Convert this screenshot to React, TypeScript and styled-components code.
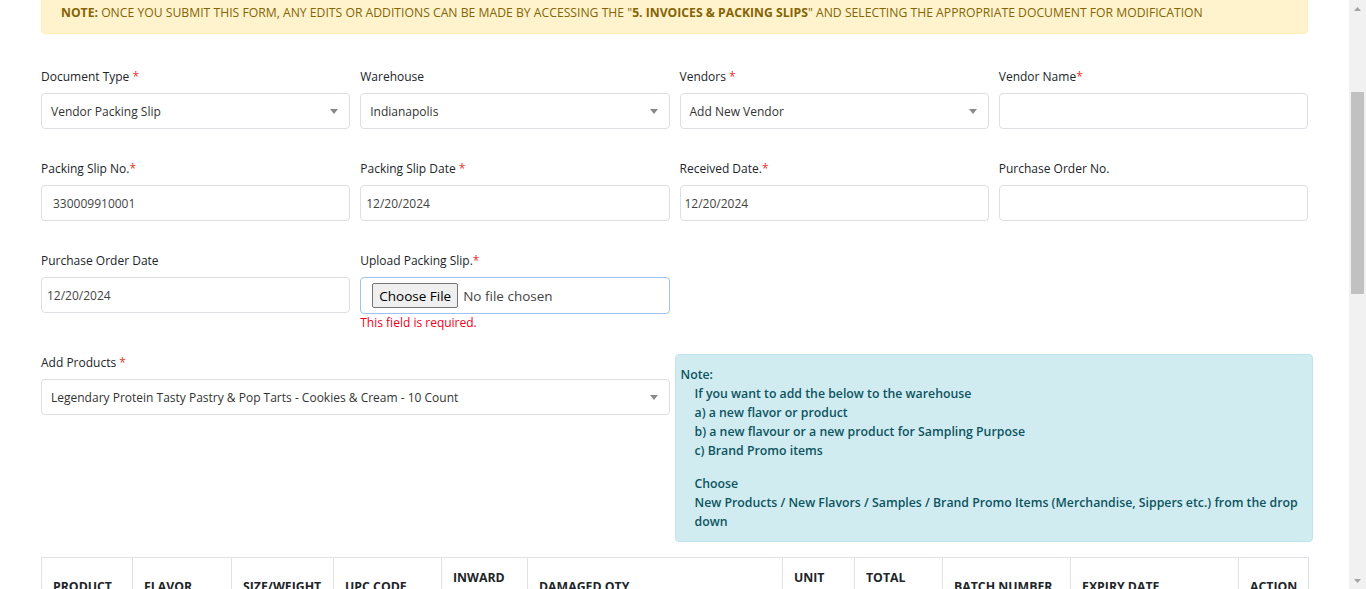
import React, { useLayoutEffect, useRef } from "react";
import styled, { createGlobalStyle } from "styled-components";

const GlobalStyle = createGlobalStyle`
  html, body {
    margin: 0;
    padding: 0;
    background: #ffffff;
  }
  html { scrollbar-width: none; }
  ::-webkit-scrollbar { display: none; }
  body {
    font-family: "Open Sans", "Liberation Sans", sans-serif;
    font-size: 12px;
    color: #212529;
  }
  * { box-sizing: border-box; }
`;

// ---------- window scrollbar (drawn over the page edge) ----------

const ScrollTrack = styled.div`
  position: fixed;
  top: 0;
  right: 0;
  width: 17px;
  height: 100vh;
  background: #f1f1f1;
  z-index: 10;
`;

const ScrollThumb = styled.div`
  position: absolute;
  top: 92px;
  left: 2px;
  right: 2px;
  height: 202px;
  background: #c1c1c1;
`;

const ScrollArrow = styled.div<{ $down?: boolean }>`
  position: absolute;
  left: 0;
  width: 17px;
  height: 17px;
  display: flex;
  align-items: center;
  justify-content: center;
  ${p => (p.$down ? "bottom: 0;" : "top: 0;")}
`;

const ArrowGlyph = ({ down }: { down?: boolean }) => (
  <svg width="7" height="4" viewBox="0 0 7 4">
    <path d={down ? "M0 0 L7 0 L3.5 4 Z" : "M0 4 L7 4 L3.5 0 Z"} fill="#a3a3a3" />
  </svg>
);

// ---------- page chrome (above the fold) ----------

const Page = styled.div`
  min-height: 1618px;
  padding-bottom: 60px;
`;

const TopBar = styled.div`
  height: 56px;
  display: flex;
  align-items: center;
  padding: 0 41px;
  border-bottom: 1px solid #e5e7eb;
  font-weight: 700;
  font-size: 16px;
  color: #1f2937;
`;

const TitleSection = styled.div`
  padding: 40px 41px 50px;
`;

const PageTitle = styled.h2`
  margin: 0;
  font-size: 22px;
  line-height: 32px;
  font-weight: 600;
`;

const Breadcrumb = styled.div`
  margin-top: 8px;
  line-height: 20px;
  color: #6c757d;
`;

// ---------- form ----------

const Container = styled.div`
  width: 1267px;
  margin-left: 41px;
`;

const WarningAlert = styled.div`
  padding: 12px 19px 10px;
  line-height: 20px;
  font-size: 12.2px;
  background: #fff3cd;
  border: 1px solid #ffeeba;
  border-radius: 4px;
  color: #856404;
  text-transform: uppercase;
  margin-bottom: 34px;

  b { font-weight: 700; }
`;

const FieldGrid = styled.div<{ $mb: number }>`
  display: grid;
  grid-template-columns: repeat(4, 1fr);
  column-gap: 10px;
  margin-bottom: ${p => p.$mb}px;
`;

const Field = styled.div<{ $span?: number }>`
  grid-column: span ${p => p.$span ?? 1};
  align-self: start;
`;

const Label = styled.label`
  display: block;
  line-height: 18px;
  margin-bottom: 7px;
  color: #212529;
`;

const Star = styled.span`
  color: #e3342f;
`;

const TextInput = styled.input<{ $pad?: number }>`
  display: block;
  width: 100%;
  height: 36px;
  border: 1px solid #dcdfe5;
  border-radius: 4px;
  padding: 0 ${p => p.$pad ?? 11}px;
  font-family: inherit;
  font-size: 12px;
  color: #444;
  background: #fff;
  outline: none;
`;

const SelectBox = styled.div`
  display: flex;
  align-items: center;
  justify-content: space-between;
  height: 36px;
  border: 1px solid #dcdfe5;
  border-radius: 4px;
  padding: 0 11px 0 9px;
  color: #333;
  background: #fff;
`;

const Caret = () => (
  <svg width="8" height="5" viewBox="0 0 8 5">
    <path d="M0 0 L8 0 L4 5 Z" fill="#8a8a8a" />
  </svg>
);

const FileBox = styled.div`
  display: flex;
  align-items: center;
  height: 37px;
  border: 1px solid #9fc2ef;
  border-radius: 4px;
  padding-left: 11px;
  background: #fff;

  input {
    font-family: inherit;
    font-size: 13.5px;
    color: #444;
  }
  input::file-selector-button {
    font-family: inherit;
    font-size: 13.5px;
    color: #000;
    background: #efefef;
    border: 1px solid #767676;
    border-radius: 2px;
    padding: 0 6px;
    height: 25px;
    margin-right: 5px;
  }
`;

const ErrorText = styled.div`
  line-height: 18px;
  color: #f0001c;
`;

const InfoNote = styled.div`
  grid-column: span 2;
  align-self: start;
  margin: 0 -5px 0 -5px;
  padding: 10px 4px 10px 5px;
  background: #d1ecf1;
  border: 1px solid #bee5eb;
  border-radius: 4px;
  color: #0c5460;
  font-size: 12.3px;
  font-weight: 600;
  line-height: 19px;
`;

const NoteBody = styled.div`
  padding-left: 14px;
`;

const NoteSpacer = styled.div`
  height: 14px;
`;

// ---------- product table ----------

const Table = styled.table`
  width: 100%;
  border-collapse: collapse;
  table-layout: fixed;
  margin-top: 15px;
`;

const Th = styled.th`
  border: 1px solid #dee2e6;
  padding: 11px 8px 11px 11px;
  text-align: left;
  vertical-align: middle;
  font-size: 12.3px;
  font-weight: 700;
  line-height: 17px;
  text-transform: uppercase;
  color: #212529;
`;

const Td = styled.td`
  border: 1px solid #dee2e6;
  padding: 10px 11px;
  vertical-align: middle;
  color: #333;
`;

const CellInput = styled.input`
  width: 100%;
  height: 32px;
  border: 1px solid #dcdfe5;
  border-radius: 4px;
  padding: 0 8px;
  font-family: inherit;
  font-size: 12px;
`;

const ButtonRow = styled.div`
  display: flex;
  justify-content: flex-end;
  gap: 10px;
  margin-top: 30px;
`;

const Button = styled.button<{ $primary?: boolean }>`
  height: 36px;
  padding: 0 20px;
  border-radius: 4px;
  font-family: inherit;
  font-size: 13px;
  border: 1px solid ${p => (p.$primary ? "#007bff" : "#6c757d")};
  background: ${p => (p.$primary ? "#007bff" : "#fff")};
  color: ${p => (p.$primary ? "#fff" : "#6c757d")};
`;

const columns: { title: string; width: number }[] = [
  { title: "Product", width: 91 },
  { title: "Flavor", width: 99 },
  { title: "Size/Weight", width: 102 },
  { title: "UPC Code", width: 108 },
  { title: "Inward Qty", width: 86 },
  { title: "Damaged Qty", width: 255 },
  { title: "Unit Price", width: 72 },
  { title: "Total Price", width: 88 },
  { title: "Batch Number", width: 128 },
  { title: "Expiry Date", width: 168 },
  { title: "Action", width: 70 },
];

// how much of the alert sits above the top edge of the window
const ALERT_HIDDEN = 10;

export default function App() {
  const alertRef = useRef<HTMLDivElement>(null);

  useLayoutEffect(() => {
    const el = alertRef.current;
    if (el) {
      const top = el.getBoundingClientRect().top + window.scrollY;
      window.scrollTo(0, top + ALERT_HIDDEN);
    }
  }, []);

  return (
    <Page>
      <GlobalStyle />
      <ScrollTrack>
        <ScrollArrow><ArrowGlyph /></ScrollArrow>
        <ScrollThumb />
        <ScrollArrow $down><ArrowGlyph down /></ScrollArrow>
      </ScrollTrack>

      <TopBar>Warehouse Portal</TopBar>
      <TitleSection>
        <PageTitle>Add Invoice / Packing Slip</PageTitle>
        <Breadcrumb>Home / Invoices &amp; Packing Slips / Add</Breadcrumb>
      </TitleSection>

      <Container>
        <WarningAlert ref={alertRef}>
          <b>Note:</b> Once you submit this form, any edits or additions can be made by accessing the "
          <b>5. Invoices &amp; Packing Slips</b>" and selecting the appropriate document for modification
        </WarningAlert>

        <FieldGrid $mb={31}>
          <Field>
            <Label>Document Type <Star>*</Star></Label>
            <SelectBox>Vendor Packing Slip<Caret /></SelectBox>
          </Field>
          <Field>
            <Label>Warehouse</Label>
            <SelectBox>Indianapolis<Caret /></SelectBox>
          </Field>
          <Field>
            <Label>Vendors <Star>*</Star></Label>
            <SelectBox>Add New Vendor<Caret /></SelectBox>
          </Field>
          <Field>
            <Label>Vendor Name<Star>*</Star></Label>
            <TextInput readOnly />
          </Field>
        </FieldGrid>

        <FieldGrid $mb={31}>
          <Field>
            <Label>Packing Slip No.<Star>*</Star></Label>
            <TextInput readOnly defaultValue="330009910001" />
          </Field>
          <Field>
            <Label>Packing Slip Date <Star>*</Star></Label>
            <TextInput readOnly $pad={5} defaultValue="12/20/2024" />
          </Field>
          <Field>
            <Label>Received Date.<Star>*</Star></Label>
            <TextInput readOnly $pad={4} defaultValue="12/20/2024" />
          </Field>
          <Field>
            <Label>Purchase Order No.</Label>
            <TextInput readOnly />
          </Field>
        </FieldGrid>

        <FieldGrid $mb={22}>
          <Field>
            <Label>Purchase Order Date</Label>
            <TextInput readOnly $pad={5} defaultValue="12/20/2024" />
          </Field>
          <Field>
            <Label>Upload Packing Slip.<Star>*</Star></Label>
            <FileBox>
              <input type="file" />
            </FileBox>
            <ErrorText>This field is required.</ErrorText>
          </Field>
        </FieldGrid>

        <FieldGrid $mb={0}>
          <Field $span={2}>
            <Label>Add Products <Star>*</Star></Label>
            <SelectBox>
              Legendary Protein Tasty Pastry &amp; Pop Tarts - Cookies &amp; Cream - 10 Count
              <Caret />
            </SelectBox>
          </Field>
          <InfoNote>
            Note:
            <NoteBody>
              If you want to add the below to the warehouse
              <br />a) a new flavor or product
              <br />b) a new flavour or a new product for Sampling Purpose
              <br />c) Brand Promo items
              <NoteSpacer />
              Choose
              <br />New Products / New Flavors / Samples / Brand Promo Items (Merchandise, Sippers etc.) from the drop down
            </NoteBody>
          </InfoNote>
        </FieldGrid>

        <Table>
          <colgroup>
            {columns.map(c => (
              <col key={c.title} style={{ width: c.width }} />
            ))}
          </colgroup>
          <thead>
            <tr>
              {columns.map(c => (
                <Th key={c.title}>{c.title}</Th>
              ))}
            </tr>
          </thead>
          <tbody>
            <tr>
              <Td>Legendary Protein</Td>
              <Td>Cookies &amp; Cream</Td>
              <Td>10 Count</Td>
              <Td>850012345678</Td>
              <Td><CellInput defaultValue="0" /></Td>
              <Td><CellInput defaultValue="0" /></Td>
              <Td>$0.00</Td>
              <Td>$0.00</Td>
              <Td><CellInput /></Td>
              <Td><CellInput placeholder="mm/dd/yyyy" /></Td>
              <Td>Remove</Td>
            </tr>
          </tbody>
        </Table>

        <ButtonRow>
          <Button>Cancel</Button>
          <Button $primary>Submit</Button>
        </ButtonRow>
      </Container>
    </Page>
  );
}
